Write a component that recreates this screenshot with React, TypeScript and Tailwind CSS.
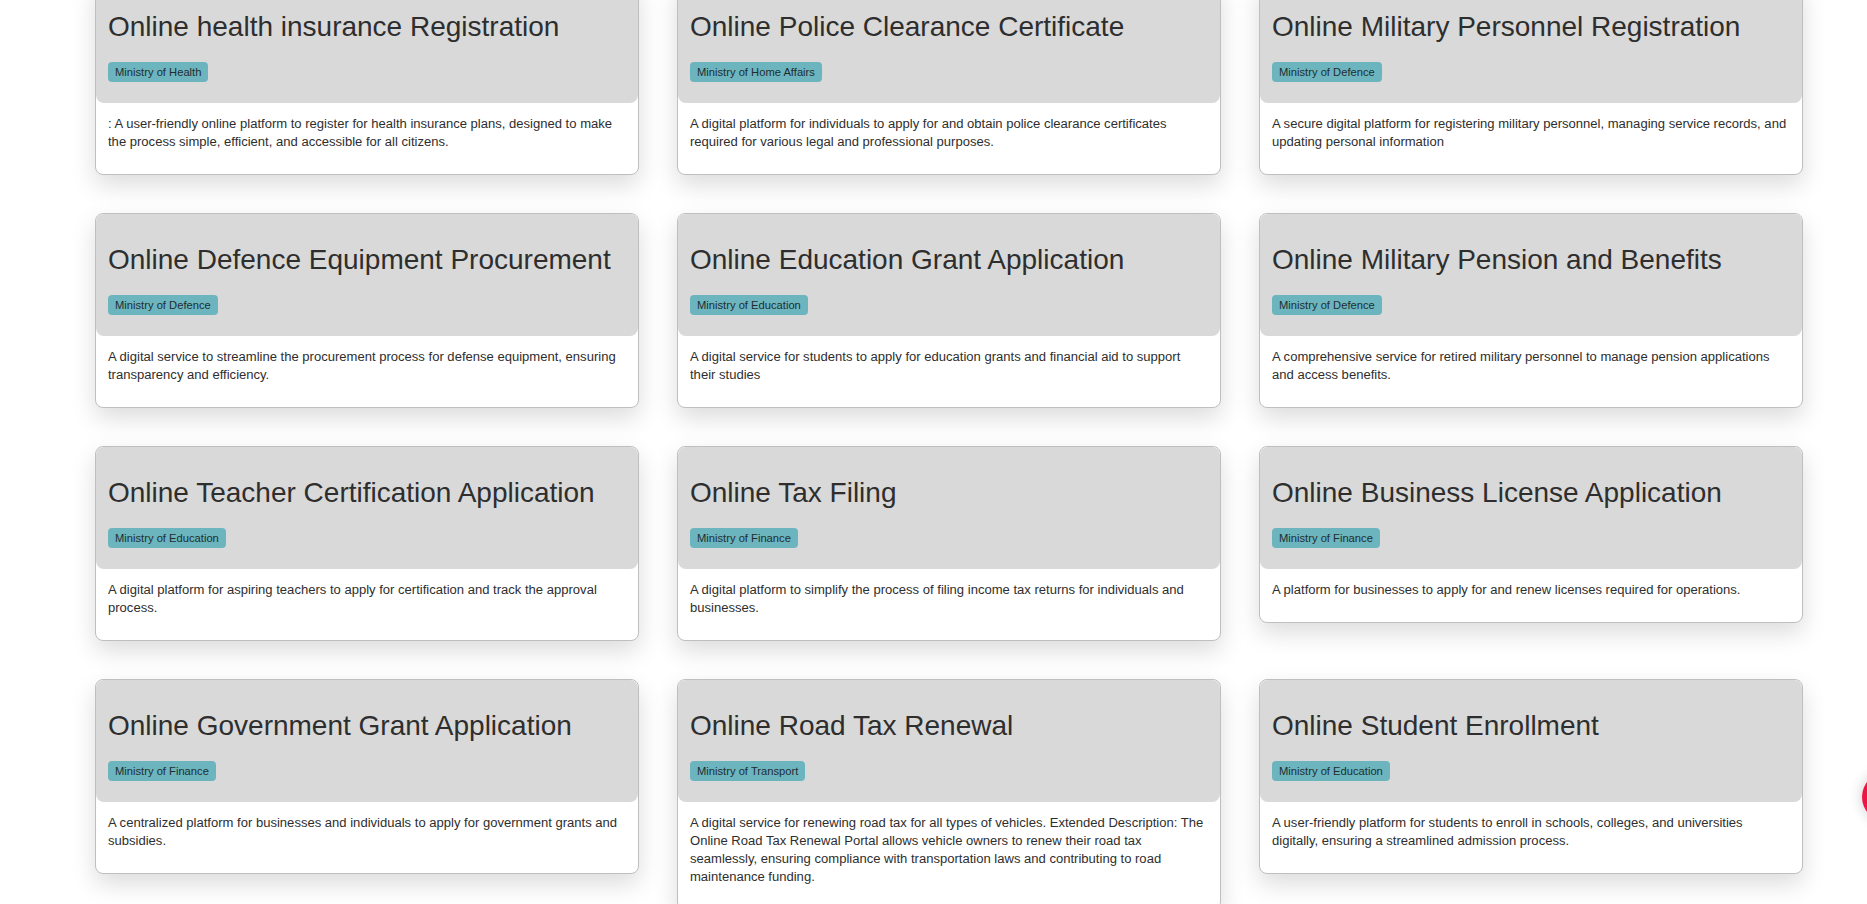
const services = [
  {
    title: 'Online health insurance Registration',
    ministry: 'Ministry of Health',
    description:
      ': A user-friendly online platform to register for health insurance plans, designed to make the process simple, efficient, and accessible for all citizens.',
  },
  {
    title: 'Online Police Clearance Certificate',
    ministry: 'Ministry of Home Affairs',
    description:
      'A digital platform for individuals to apply for and obtain police clearance certificates required for various legal and professional purposes.',
  },
  {
    title: 'Online Military Personnel Registration',
    ministry: 'Ministry of Defence',
    description:
      'A secure digital platform for registering military personnel, managing service records, and updating personal information',
  },
  {
    title: 'Online Defence Equipment Procurement',
    ministry: 'Ministry of Defence',
    description:
      'A digital service to streamline the procurement process for defense equipment, ensuring transparency and efficiency.',
  },
  {
    title: 'Online Education Grant Application',
    ministry: 'Ministry of Education',
    description:
      'A digital service for students to apply for education grants and financial aid to support their studies',
  },
  {
    title: 'Online Military Pension and Benefits',
    ministry: 'Ministry of Defence',
    description:
      'A comprehensive service for retired military personnel to manage pension applications and access benefits.',
  },
  {
    title: 'Online Teacher Certification Application',
    ministry: 'Ministry of Education',
    description:
      'A digital platform for aspiring teachers to apply for certification and track the approval process.',
  },
  {
    title: 'Online Tax Filing',
    ministry: 'Ministry of Finance',
    description:
      'A digital platform to simplify the process of filing income tax returns for individuals and businesses.',
  },
  {
    title: 'Online Business License Application',
    ministry: 'Ministry of Finance',
    description: 'A platform for businesses to apply for and renew licenses required for operations.',
  },
  {
    title: 'Online Government Grant Application',
    ministry: 'Ministry of Finance',
    description:
      'A centralized platform for businesses and individuals to apply for government grants and subsidies.',
  },
  {
    title: 'Online Road Tax Renewal',
    ministry: 'Ministry of Transport',
    description:
      'A digital service for renewing road tax for all types of vehicles. Extended Description: The Online Road Tax Renewal Portal allows vehicle owners to renew their road tax seamlessly, ensuring compliance with transportation laws and contributing to road maintenance funding.',
  },
  {
    title: 'Online Student Enrollment',
    ministry: 'Ministry of Education',
    description:
      'A user-friendly platform for students to enroll in schools, colleges, and universities digitally, ensuring a streamlined admission process.',
  },
];

function ServiceCard({ title, ministry, description }: { title: string; ministry: string; description: string }) {
  return (
    <div className="bg-white border border-[#bfbfbf] rounded-lg shadow-[0_10px_25px_rgba(0,0,0,0.14)]">
      {/* Header block */}
      <div className="bg-[#d9d9d9] rounded-lg px-3 pt-[29px] pb-[21px]">
        <h3 className="text-[28px] leading-[34px] text-[#2e2e2e] whitespace-nowrap">{title}</h3>
        <div className="flex mt-[18px]">
          <span className="flex items-center h-[20px] px-[7px] rounded bg-[#6cb5be] text-[11.2px] text-[#1f2d30]">
            {ministry}
          </span>
        </div>
      </div>
      <p className="px-3 pt-3 pb-[23px] text-[13.05px] leading-[18px] text-[#2e2e2e]">{description}</p>
    </div>
  );
}

export default function App() {
  return (
    <div className="min-h-screen bg-white overflow-hidden font-['Liberation_Sans',Arial,sans-serif]">
      <div className="grid grid-cols-[repeat(3,544px)] items-start gap-[38px] pl-[95px] -mt-5">
        {services.map((s) => (
          <ServiceCard key={s.title} {...s} />
        ))}
      </div>

      {/* Floating action button, mostly off-screen */}
      <div className="fixed top-[772px] right-[-45px] w-[50px] h-[50px] rounded-full bg-[#ef1445] shadow-[0_0_14px_rgba(0,0,0,0.2)]" />
    </div>
  );
}
